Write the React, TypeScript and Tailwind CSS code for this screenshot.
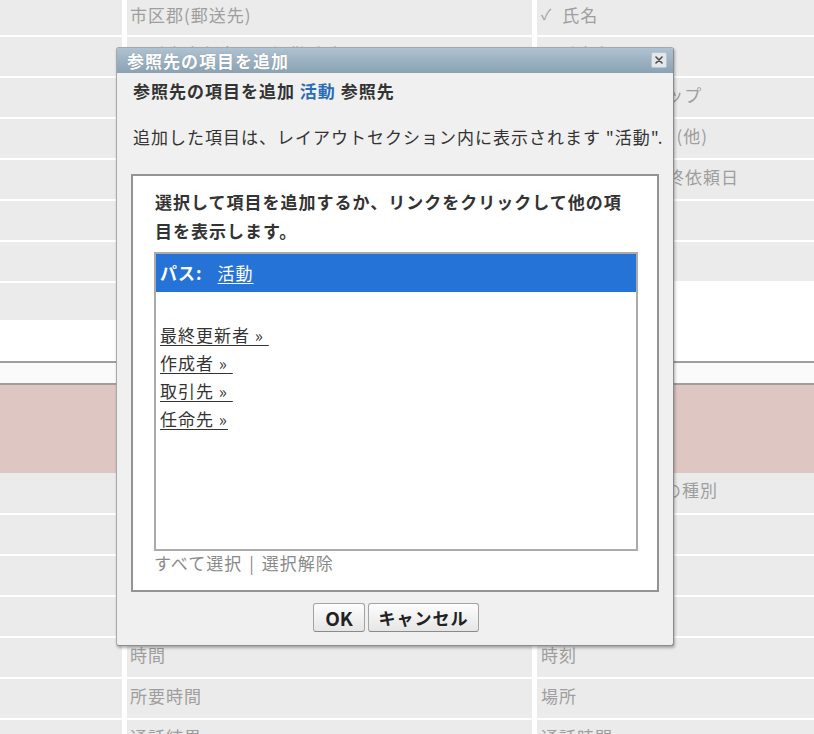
import React from "react";

const FONT = { fontFamily: '"Noto Sans CJK JP", "Noto Sans", sans-serif' };

function Row({ h, c2, c3, gray1 = true, gray = true }: { h: number; c2?: React.ReactNode; c3?: React.ReactNode; gray1?: boolean; gray?: boolean }) {
  return (
    <div className="grid grid-cols-[122px_405px_1fr] gap-x-[5px]" style={{ height: h }}>
      <div className={gray1 ? "bg-[#ebebeb]" : "bg-white"} />
      <div className={`${gray ? "bg-[#ebebeb]" : "bg-white"} flex items-center pb-[6px] pl-[3px] text-[17px] tracking-[1px] text-[#9e9e9e] whitespace-nowrap overflow-hidden`}>{c2}</div>
      <div className={`${gray ? "bg-[#ebebeb]" : "bg-white"} flex items-center pb-[6px] pl-[4px] text-[17px] tracking-[1px] text-[#9e9e9e] whitespace-nowrap overflow-hidden`}>{c3}</div>
    </div>
  );
}

export default function App() {
  return (
    <div className="relative w-[814px] h-[734px] overflow-hidden bg-white" style={FONT}>
      <div className="flex flex-col gap-y-[2px]">
        <Row h={35} c2="市区郡(郵送先)" c3={<><span className="text-[15px] mr-[10px]">✓</span>氏名</>} />
        <Row h={39} c2="取引先責任者 電話 (勤務先)" c3="取引先名" />
        <Row h={39} c3="次回フォローアップ" />
        <Row h={39} c3={<>自宅の電話番号&nbsp;&nbsp;(他)</>} />
        <Row h={39} c3="取引先担当の最終依頼日" />
        <Row h={39} />
        <Row h={39} />
      </div>
      <div className="flex flex-col">
        <div className="h-[39px] grid grid-cols-[122px_1fr]">
          <div className="bg-[#ebebeb] mt-[2px]" />
          <div className="bg-white" />
        </div>
        <div className="h-[41px] bg-white" />
        <div className="h-[2px] bg-[#9e9e9e]" />
        <div className="h-[20px] bg-[#fafafa]" />
        <div className="h-[2px] bg-[#9e9e9e]" />
        <div className="h-[88px] bg-[#dec6c2]" />
      </div>
      <div className="flex flex-col gap-y-[2px]">
        <Row h={40} c3="アクティビティの種別" />
        <Row h={39} />
        <Row h={39} />
        <Row h={39} />
        <Row h={39} c2="時間" c3="時刻" />
        <Row h={39} c2="所要時間" c3="場所" />
        <Row h={39} c2="通話結果" c3="通話時間" />
      </div>

      {/* Dialog */}
      <div className="absolute left-[116px] top-[47px] w-[558px] h-[599px] bg-[#f0f0f0] border border-[#a8a8a8] border-r-[#8c8c8c] border-b-[#8c8c8c] rounded-[3px] shadow-[1px_2px_3px_rgba(0,0,0,0.3)] overflow-hidden">
        <div className="relative h-[25px] bg-gradient-to-b from-[#aec2d1] to-[#8aa2b4] flex items-center pl-[10px] text-white font-bold text-[17px] tracking-[1px] [text-shadow:0_0_1px_rgba(0,0,0,0.25)]">
          参照先の項目を追加
          <div className="absolute right-[6px] top-[4px] w-[16px] h-[16px] rounded-[2px] bg-[#e2e7eb] border border-[#b9c4cd] flex items-center justify-center">
            <svg width="8" height="8" viewBox="0 0 8 8">
              <path d="M1 1L7 7M7 1L1 7" stroke="#4a4a4a" strokeWidth="1.6" strokeLinecap="round" />
            </svg>
          </div>
        </div>
        <div className="px-[14px]">
          <div className="mt-[6px] pl-[2px] h-[24px] leading-[24px] font-bold text-[17px] tracking-[1px] text-[#333]">
            参照先の項目を追加 <span className="text-[#2b6cb7]">活動</span> 参照先
          </div>
          <div className="mt-[22px] pl-[2px] h-[24px] leading-[24px] text-[17px] tracking-[1px] text-[#333] whitespace-nowrap">
            追加した項目は、レイアウトセクション内に表示されます "活動".
          </div>
          <div className="mt-[25px] h-[418px] border-2 border-[#949494] bg-white pt-[11px] pl-[21px] pr-[19px]">
            <div className="pl-[1px] font-bold text-[17px] tracking-[1px] leading-[29px] text-[#333]">
              選択して項目を追加するか、リンクをクリックして他の項目を表示します。
            </div>
            <div className="mt-[7px] h-[299px] border-2 border-[#ababab] bg-white">
              <div className="h-[38px] bg-[#2673d8] flex items-center pl-[4px] text-white text-[17px] tracking-[1px]">
                <span className="font-bold">パス:</span>
                <span className="ml-[15px] underline underline-offset-[3px]">活動</span>
              </div>
              <div className="mt-[29px] pl-[4px] flex flex-col items-start text-[17px] tracking-[1px] leading-[28px] text-[#333]">
                <span className="underline underline-offset-[3px] decoration-[#333]">最終更新者 »&nbsp;</span>
                <span className="underline underline-offset-[3px] decoration-[#333]">作成者 »&nbsp;</span>
                <span className="underline underline-offset-[3px] decoration-[#333]">取引先 »&nbsp;</span>
                <span className="underline underline-offset-[3px] decoration-[#333]">任命先 »</span>
              </div>
            </div>
            <div className="h-[24px] leading-[24px] text-[17px] tracking-[1px] text-[#8a8a8a] whitespace-nowrap">
              すべて選択<span className="mx-[7px]">|</span>選択解除
            </div>
          </div>
          <div className="mt-[11px] flex justify-center gap-[3px] pl-[2px]">
            <button className="w-[52px] h-[29px] rounded-[3px] border border-[#a3a3a3] border-b-[#8a8a8a] bg-gradient-to-b from-[#fdfdfd] to-[#e6e6e6] font-bold text-[19px] text-[#222] leading-none">
              OK
            </button>
            <button className="w-[111px] h-[29px] rounded-[3px] border border-[#a3a3a3] border-b-[#8a8a8a] bg-gradient-to-b from-[#fdfdfd] to-[#e6e6e6] font-bold text-[17px] tracking-[1px] text-[#222] leading-none">
              キャンセル
            </button>
          </div>
        </div>
      </div>
    </div>
  );
}
